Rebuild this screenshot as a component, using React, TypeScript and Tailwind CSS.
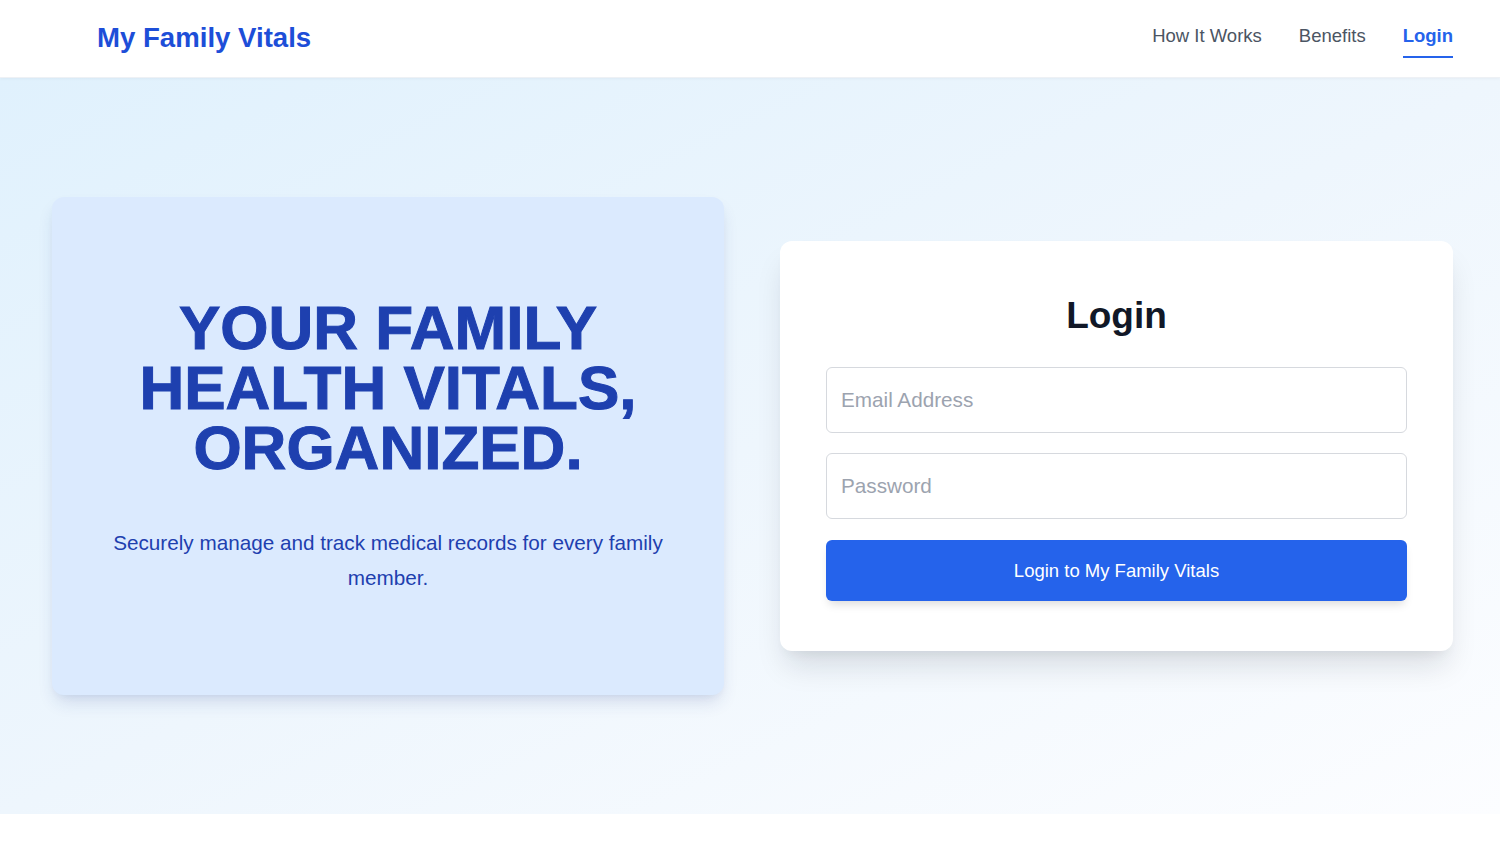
import React from "react";

export default function App() {
  return (
    <div className="min-h-screen bg-white font-['Liberation_Sans',Arial,sans-serif]">
      <header className="h-[78px] bg-white border-b border-[#eef1f5] shadow-[0_1px_3px_rgba(0,0,0,0.04)] flex items-center justify-between pl-[97px] pr-[47px] relative z-10">
        <div className="text-[27.6px] font-bold text-[#1d4ed8] leading-none -mt-[1px]">My Family Vitals</div>
        <nav className="flex items-center gap-[37px] text-[18.5px] mt-[1px]">
          <a className="text-[#4b5563] pt-[2px] pb-[6px] border-b-2 border-transparent">How It Works</a>
          <a className="text-[#4b5563] pt-[2px] pb-[6px] border-b-2 border-transparent">Benefits</a>
          <a className="text-[#2563eb] font-bold pt-[2px] pb-[6px] border-b-2 border-[#2563eb]">Login</a>
        </nav>
      </header>

      <section className="h-[736px] bg-gradient-to-br from-[#e0f1fd] via-[#eef6fd] to-[#fcfdff] flex items-center pl-[52px] pr-[47px] gap-[56px]">
        <div className="w-[672px] h-[498px] bg-[#dbeafe] rounded-xl shadow-[0_10px_18px_-4px_rgba(30,58,138,0.16),0_4px_8px_-4px_rgba(30,58,138,0.08)] flex flex-col justify-center items-center px-12 text-center">
          <h1 className="text-[62px] leading-[60px] font-black text-[#1e40af] [-webkit-text-stroke:1px_#1e40af]">
            YOUR FAMILY
            <br />
            HEALTH VITALS,
            <br />
            ORGANIZED.
          </h1>
          <p className="mt-[47px] text-[20.7px] leading-[35px] text-[#1e40af]">
            Securely manage and track medical records for every family member.
          </p>
        </div>

        <div className="w-[673px] h-[410px] bg-white rounded-xl shadow-[0_20px_30px_-6px_rgba(15,23,42,0.13),0_8px_12px_-6px_rgba(15,23,42,0.06)] px-[46px] pt-[53px]">
          <h2 className="text-[37px] leading-[44px] font-bold text-[#111827] text-center mb-[29px]">Login</h2>
          <input
            type="email"
            placeholder="Email Address"
            className="block w-full h-[66px] border border-[#d6d9de] rounded-md px-[14px] text-[20.7px] text-[#111827] placeholder:text-[#9ca3af] outline-none bg-white"
          />
          <input
            type="password"
            placeholder="Password"
            className="block w-full h-[66px] mt-[20px] border border-[#d6d9de] rounded-md px-[14px] text-[20.7px] text-[#111827] placeholder:text-[#9ca3af] outline-none bg-white"
          />
          <button className="block w-full h-[61px] mt-[21px] bg-[#2563eb] rounded-md text-white text-[18.5px] shadow-[0_6px_10px_-3px_rgba(0,0,0,0.15)]">
            Login to My Family Vitals
          </button>
        </div>
      </section>
      <div className="h-[30px] bg-white" />
    </div>
  );
}
